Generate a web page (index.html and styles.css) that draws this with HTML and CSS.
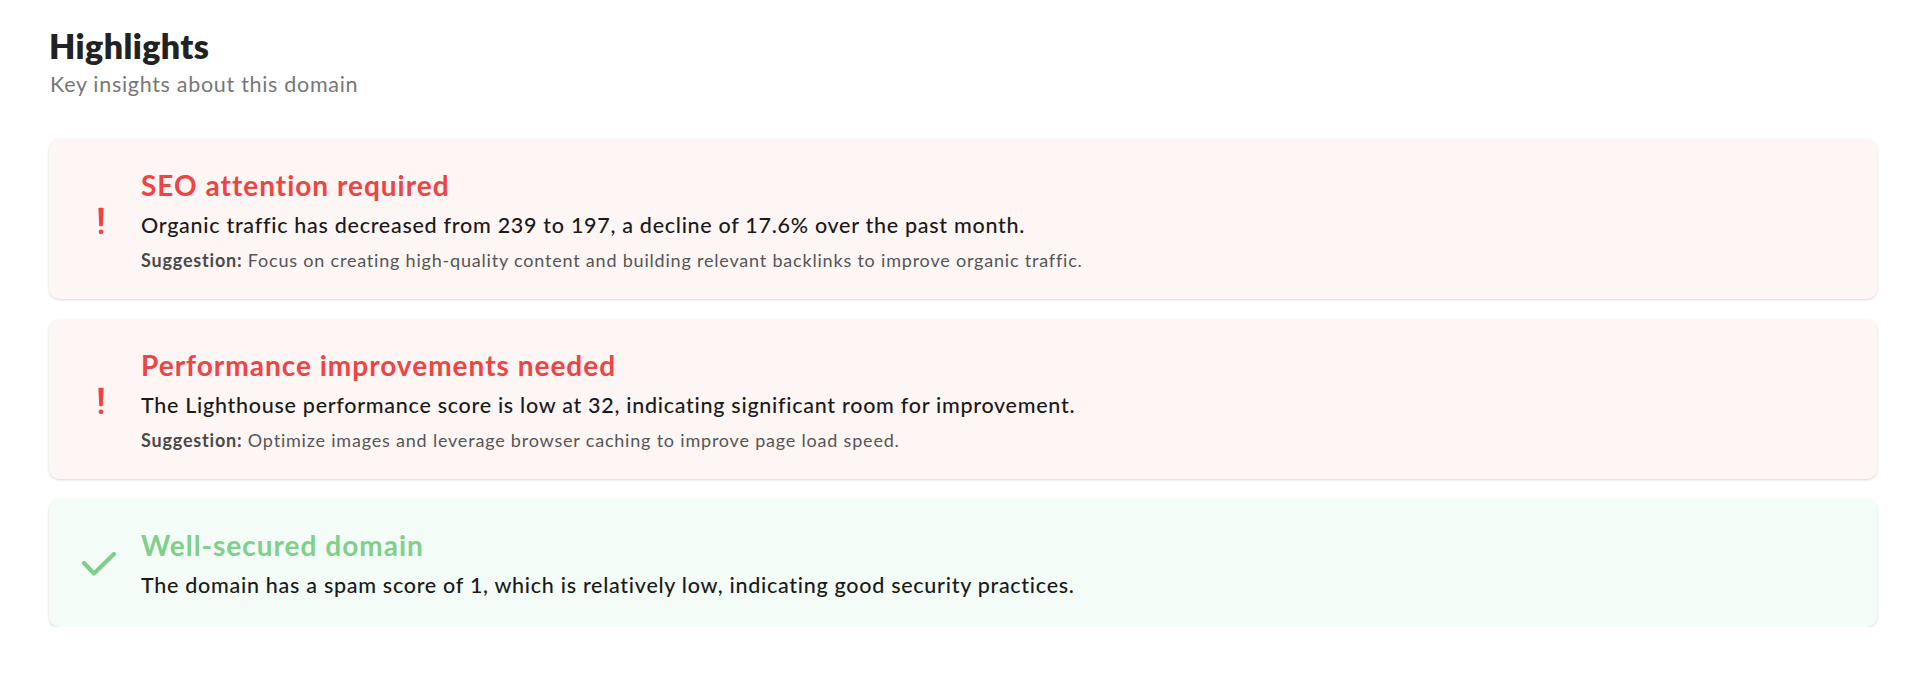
FILE: index.html
```html
<!DOCTYPE html>
<html lang="en">
<head>
<meta charset="utf-8">
<title>Highlights</title>
<link rel="stylesheet" href="styles.css">
</head>
<body>
<main class="page">
  <header class="head">
    <h1 class="head-title">Highlights</h1>
    <p class="head-sub">Key insights about this domain</p>
  </header>
  <section class="list">
    <article class="card card-bad">
      <div class="card-icon">
        <svg class="ico-excl" viewBox="0 0 8 29" width="8" height="29" aria-hidden="true">
          <path d="M2.2 2.5 L5.8 2.5 L5 19.5 L3 19.5 Z" fill="#ef4444" stroke="#ef4444" stroke-width="1.6" stroke-linejoin="round"/>
          <circle cx="4" cy="25.8" r="2.4" fill="#ef4444"/>
        </svg>
      </div>
      <div class="card-body">
        <h2 class="card-title">SEO attention required</h2>
        <p class="card-text">Organic traffic has decreased from 239 to 197, a decline of 17.6% over the past month.</p>
        <p class="card-sugg"><strong>Suggestion:</strong> Focus on creating high-quality content and building relevant backlinks to improve organic traffic.</p>
      </div>
    </article>
    <article class="card card-bad">
      <div class="card-icon">
        <svg class="ico-excl" viewBox="0 0 8 29" width="8" height="29" aria-hidden="true">
          <path d="M2.2 2.5 L5.8 2.5 L5 19.5 L3 19.5 Z" fill="#ef4444" stroke="#ef4444" stroke-width="1.6" stroke-linejoin="round"/>
          <circle cx="4" cy="25.8" r="2.4" fill="#ef4444"/>
        </svg>
      </div>
      <div class="card-body">
        <h2 class="card-title">Performance improvements needed</h2>
        <p class="card-text">The Lighthouse performance score is low at 32, indicating significant room for improvement.</p>
        <p class="card-sugg"><strong>Suggestion:</strong> Optimize images and leverage browser caching to improve page load speed.</p>
      </div>
    </article>
    <article class="card card-good">
      <div class="card-icon">
        <svg class="ico-check" viewBox="0 0 36 26" width="36" height="26" aria-hidden="true">
          <polyline points="3,12 13,22.5 33,3" fill="none" stroke="#7fcf88" stroke-width="4.2" stroke-linecap="round" stroke-linejoin="round"/>
        </svg>
      </div>
      <div class="card-body">
        <h2 class="card-title">Well-secured domain</h2>
        <p class="card-text">The domain has a spam score of 1, which is relatively low, indicating good security practices.</p>
      </div>
    </article>
  </section>
</main>
</body>
</html>
```

FILE: styles.css
```css
* { box-sizing: border-box; }
html, body { margin: 0; padding: 0; background: #ffffff; }
body { font-family: "Lato", "Noto Sans", sans-serif; color: #1c1c1c; }

.page { padding: 28px 43px 0 49px; }

.head-title {
  margin: 0;
  font-family: "Lato", sans-serif;
  font-weight: 800;
  font-size: 34px;
  line-height: 36px;
  letter-spacing: 0.4px;
  color: #222222;
}
.head-sub {
  margin: 6px 0 0 1px;
  font-size: 21.5px;
  line-height: 28px;
  letter-spacing: 0.7px;
  color: #777777;
}

.list {
  margin-top: 41px;
  display: flex;
  flex-direction: column;
  gap: 20px;
}

.card {
  display: flex;
  align-items: center;
  gap: 20px;
  padding: 29px 32px 27px 32px;
  border-radius: 10px;
  box-shadow: 0 1px 3px rgba(0, 0, 0, 0.12), 0 1px 2px rgba(0, 0, 0, 0.04);
}
.card-good { padding-bottom: 28px; }
.card-bad { background: #fef5f5; }
.card-good { background: #f3fcf7; }

.card-icon {
  width: 40px;
  flex: 0 0 40px;
  display: flex;
  justify-content: center;
  align-items: center;
}
.ico-check { margin-left: -4px; }

.card-body { flex: 1 1 auto; min-width: 0; }

.card-title {
  margin: 0 0 8px 0;
  font-size: 28px;
  line-height: 35px;
  font-weight: 700;
  letter-spacing: 1px;
}
.card-bad .card-title { color: #ef4444; }
.card-good .card-title { color: #80d08a; }

.card-text {
  margin: 0;
  font-size: 21.5px;
  line-height: 28px;
  font-weight: 500;
  letter-spacing: 0.72px;
  color: #1a1a1a;
}
.card-sugg {
  margin: 9px 0 0 0;
  font-size: 18px;
  line-height: 24px;
  letter-spacing: 0.8px;
  color: #555555;
}
.card-sugg strong { font-weight: 700; color: #4a4a4a; }
```
